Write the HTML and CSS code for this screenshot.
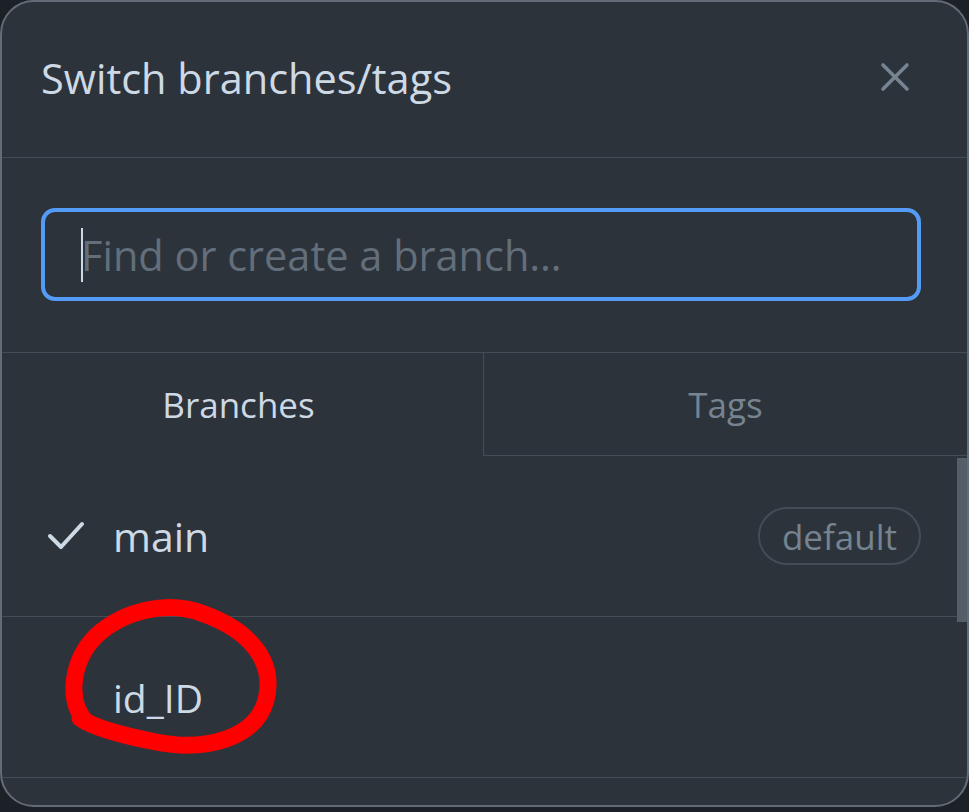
FILE: index.html
```html
<!DOCTYPE html>
<html>
<head>
<meta charset="utf-8">
<link rel="stylesheet" href="styles.css">
</head>
<body>
<div class="modal">
  <div class="header">
    <div class="title">Switch branches/tags</div>
    <svg class="close" width="32" height="32" viewBox="0 0 32 32"><path d="M4 4 L28 28 M28 4 L4 28" stroke="#768390" stroke-width="3.6" stroke-linecap="round" fill="none"/></svg>
  </div>
  <div class="search">
    <div class="input"><span class="caret"></span><span class="placeholder">Find or create a branch…</span></div>
  </div>
  <div class="tabs">
    <div class="tab active">Branches</div>
    <div class="tab">Tags</div>
  </div>
  <div class="list">
    <div class="row">
      <svg class="check" width="38" height="32" viewBox="0 0 38 32"><path d="M3 16 L14 27 L35 4" stroke="#cdd9e5" stroke-width="4" stroke-linecap="round" stroke-linejoin="round" fill="none"/></svg>
      <span class="name">main</span>
      <span class="badge">default</span>
    </div>
    <div class="row">
      <span class="name indent">id_ID</span>
    </div>
    <div class="scrollbar"></div>
  </div>
</div>
<svg class="annot" width="969" height="812" viewBox="0 0 969 812"><path d="M86 722 C66 700 72 660 96 636 C124 610 168 600 204 614 C248 630 276 660 266 700 C256 738 206 752 156 742 C120 735 94 728 80 718" stroke="#ff0000" stroke-width="17" stroke-linecap="round" fill="none"/></svg>
</body>
</html>
```
FILE: styles.css
```css
html, body {
  margin: 0;
  padding: 0;
  background: #1c2128;
  font-family: "Open Sans", "DejaVu Sans", sans-serif;
}
body {
  width: 969px;
  height: 812px;
  overflow: hidden;
  position: relative;
}
.modal {
  width: 969px;
  height: 807px;
  box-sizing: border-box;
  border: 2px solid #636c76;
  border-radius: 34px;
  background: #2d333b;
  overflow: hidden;
  display: flex;
  flex-direction: column;
}
.header {
  height: 155px;
  flex: none;
  display: flex;
  align-items: center;
  justify-content: space-between;
  padding: 0 54px 0 39px;
  border-bottom: 1px solid #444c56;
}
.title {
  font-size: 41.5px;
  color: #cdd9e5;
  margin-top: -4px;
}
.close {
  display: block;
  margin-top: -6px;
  margin-right: 2px;
}
.search {
  flex: none;
  padding: 50px 46px 51px 39px;
  border-bottom: 1px solid #444c56;
}
.input {
  height: 93px;
  box-sizing: border-box;
  border: 4px solid #539bf5;
  border-radius: 14px;
  display: flex;
  align-items: center;
  padding-left: 36px;
}
.caret {
  width: 2px;
  height: 54px;
  background: #cdd9e5;
  margin-right: -2px;
}
.placeholder {
  font-size: 41.5px;
  color: #636e7b;
}
.tabs {
  flex: none;
  height: 103px;
  display: flex;
}
.tab {
  flex: 1;
  display: flex;
  align-items: center;
  justify-content: center;
  font-size: 35px;
  color: #768390;
  box-sizing: border-box;
  border-left: 1px solid #444c56;
  border-bottom: 1px solid #444c56;
}
.tab.active {
  flex: 0 0 481px;
  padding-right: 8px;
  color: #cdd9e5;
  border: none;
}
.list {
  position: relative;
  flex: 1;
}
.row {
  height: 160px;
  display: flex;
  align-items: center;
  border-bottom: 1px solid #444c56;
  padding: 0 46px 0 45px;
}
.check {
  display: block;
  margin-right: 28px;
}
.name {
  font-size: 41px;
  color: #cdd9e5;
}
.name.indent {
  font-size: 39px;
  margin-left: 66px;
}
.badge {
  margin-left: auto;
  height: 58px;
  box-sizing: border-box;
  border: 2px solid #444c56;
  border-radius: 30px;
  padding: 0 22px;
  display: flex;
  align-items: center;
  font-size: 35px;
  color: #768390;
}
.scrollbar {
  position: absolute;
  right: 0;
  top: 2px;
  width: 10px;
  height: 164px;
  background: #545d68;
}
.annot {
  position: absolute;
  left: 0;
  top: 0;
  pointer-events: none;
}
```
